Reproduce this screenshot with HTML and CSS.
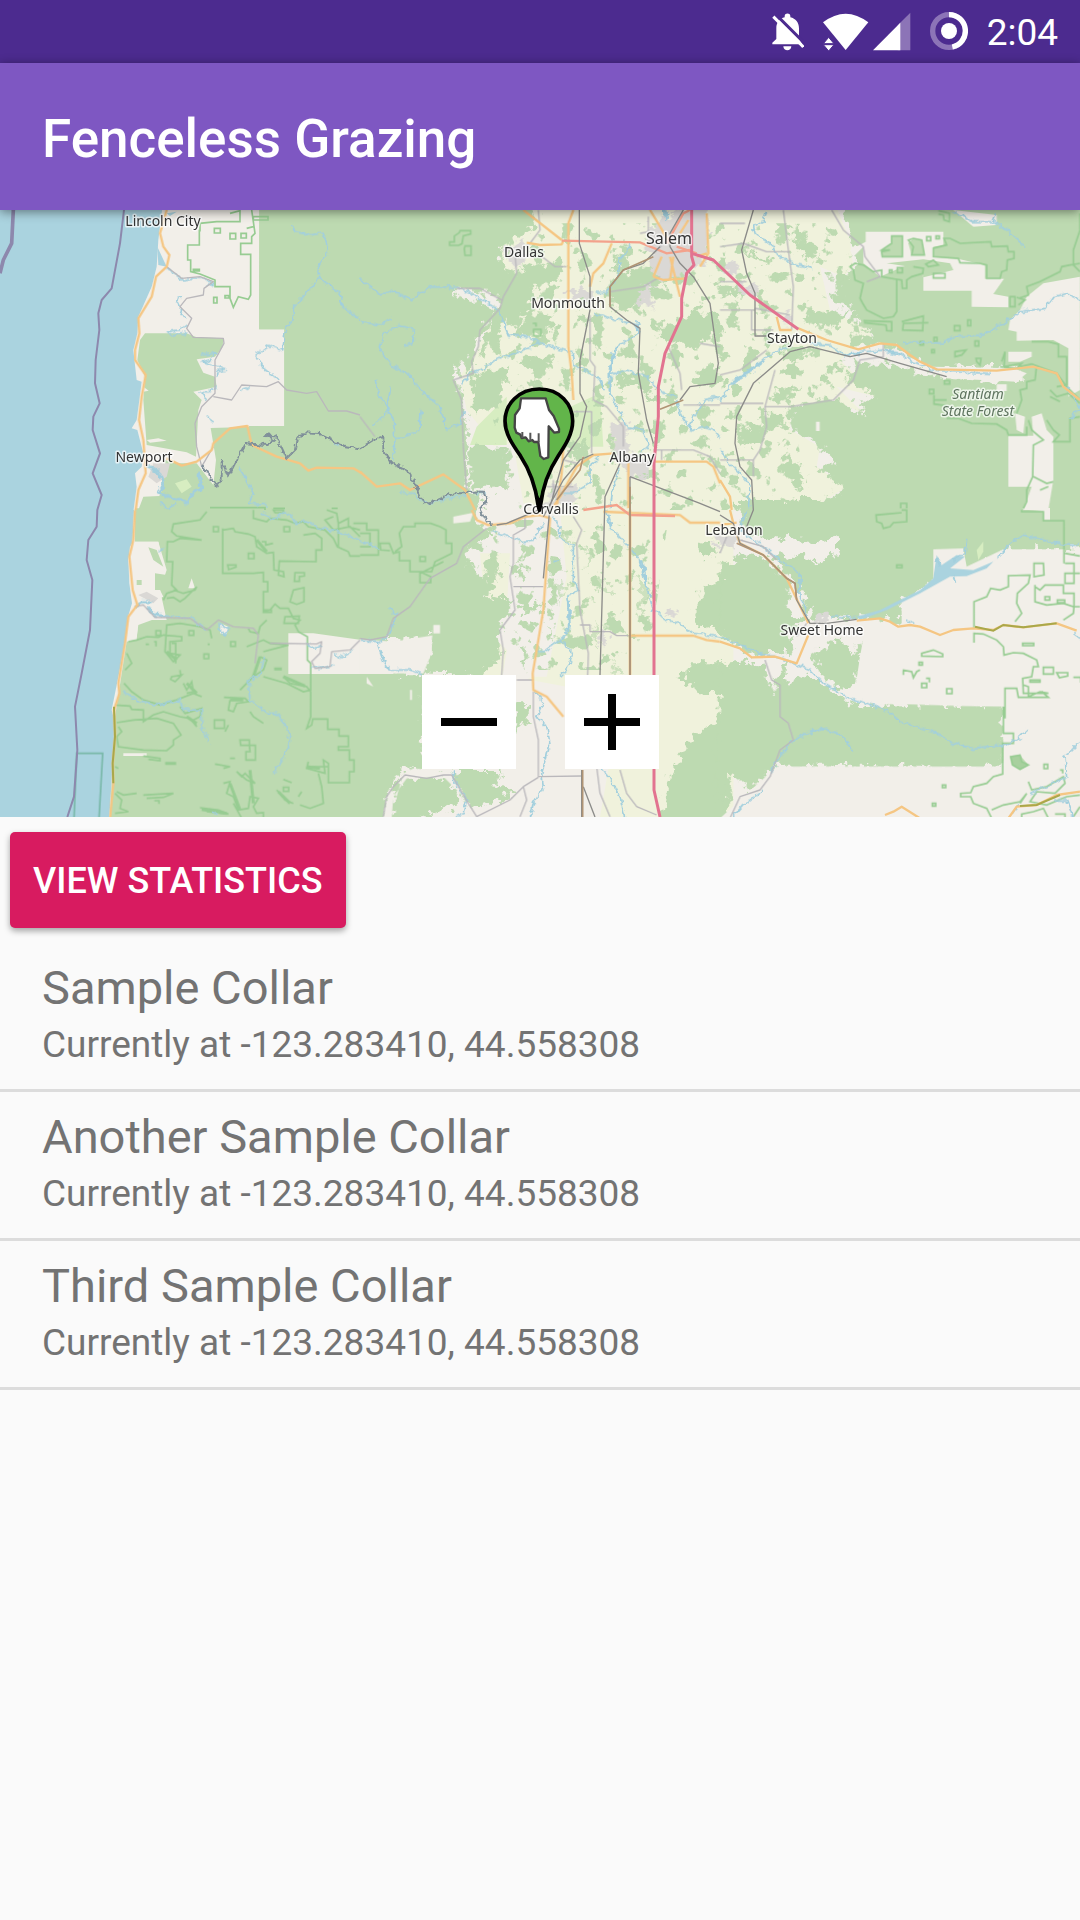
FILE: index.html
```html
<!DOCTYPE html>
<html lang="en">
<head>
<meta charset="utf-8">
<meta name="viewport" content="width=device-width, initial-scale=1">
<title>Fenceless Grazing</title>
<link rel="stylesheet" href="styles.css">
</head>
<body>
<div class="status-bar">
  <svg class="icon-bell" viewBox="90 36 96 117" aria-hidden="true">
    <path fill="#fff" d="M103 133H91v-5l12-11V85c0-18 10-29 25-33v-4c0-10 17-10 17 0v4c16 4 26 15 26 33v32l10 16zM124 139h24c0 16-24 16-24 0z"/>
    <path stroke="#4c2b8f" stroke-width="9" d="M104 46l88 88"/>
    <path stroke="#fff" stroke-width="9" d="M94 50l90 91"/>
  </svg>
  <div class="signals">
    <svg class="icon-wifi" viewBox="246 36 138 117" aria-hidden="true">
      <path fill="#fff" d="M246 67q68-52 136 0L314 150z"/>
      <path fill="#fff" stroke="#4c2b8f" stroke-width="3" d="M247 131l16-19 16 19zM247 134h32l-16 19z"/>
    </svg>
    <svg class="icon-signal" viewBox="396 36 114 117" aria-hidden="true">
      <path fill="#8c74b7" d="M508 38v113H470V76z"/>
      <path fill="#fff" d="M396 151l82-83v83z"/>
    </svg>
  </div>
  <svg class="icon-ring" viewBox="573 36 114 117" aria-hidden="true">
    <circle cx="630" cy="93" r="49" fill="none" stroke="#8c74b7" stroke-width="16"/>
    <path fill="none" stroke="#fff" stroke-width="16" d="M630 44a49 49 0 0 1 10 97"/>
    <circle cx="630" cy="93" r="24" fill="#fff"/>
  </svg>
  <time class="clock">2:04</time>
</div>

<header class="app-bar"><h1>Fenceless Grazing</h1></header>

<main>
<section class="map" aria-label="Collar map">
<svg class="map-canvas" viewBox="0 0 1080 607" preserveAspectRatio="xMidYMid slice">
<defs>
  <filter id="ragged" x="-5%" y="-5%" width="110%" height="110%" color-interpolation-filters="sRGB">
    <feTurbulence type="fractalNoise" baseFrequency="0.04" numOctaves="4" seed="4"/>
    <feDisplacementMap in="SourceGraphic" scale="60" xChannelSelector="R" yChannelSelector="G"/>
  </filter>
  <filter id="wavy" x="-5%" y="-5%" width="110%" height="110%" color-interpolation-filters="sRGB">
    <feTurbulence type="fractalNoise" baseFrequency="0.06" numOctaves="2" seed="9"/>
    <feDisplacementMap in="SourceGraphic" scale="20" xChannelSelector="R" yChannelSelector="G"/>
  </filter>
  <filter id="speckle" x="0" y="0" width="100%" height="100%" color-interpolation-filters="sRGB">
    <feTurbulence type="fractalNoise" baseFrequency="0.022" numOctaves="4" seed="12"/>
    <feColorMatrix values="0 0 0 0 .741  0 0 0 0 .855  0 0 0 0 .694  18 0 0 0 -10.8"/>
    <feComposite in2="SourceGraphic" operator="in"/>
  </filter>
</defs>
<rect class="land" width="1080" height="607"/>
<svg width="1080" height="607" viewBox="0 0 3240 1821">

<!-- farmland and ragged valley woods -->
<path class="farm" d="M1500 0H2200V1821H1790L1700 1750 1560 1600 1560 1500 1480 1460 1380 1300 1400 1200 1500 1080 1500 930 1480 700 1400 600 1380 500 1500 300z"/>
<g transform="translate(2160 -30)"><path class="farm" d="M0 0H340L390 120 400 200 370 230 300 200 330 330 450 390 455 410 430 430 400 450 360 480 470 590 350 560 430 640 340 600 215 620 210 690 300 740 290 800 380 860 270 930H0z"/></g>
<path class="land" d="M1400 720L1540 700 1570 880 1680 900 1700 1100 1640 1400 1600 1400 1500 1300 1380 1400 1340 1300 1300 900zM1560 1100H1640L1600 1400 1500 1440zM1540 1400L1700 1430 1820 1500 1900 1821H1500z"/>
<path class="farm" d="M1440 1030L1530 1030 1520 1200 1460 1230zM1780 1400L2180 1300 2120 1600 2040 1680 2040 1821H1950zM1830 1650L2010 1640 2010 1821H1800z"/>
<path class="pale" d="M1690 600L1800 550 1810 710H1680zM1430 650L1520 560 1520 705H1410z"/>
<path filter="url(#speckle)" d="M1540 40H2500L2640 350 2560 580 2380 640 2440 900H2160L2060 900H1560L1500 720 1450 500zM1400 930H1720L2000 960 1960 1250 1850 1380H1380z"/>

<g filter="url(#ragged)">
  <g transform="translate(1080 -30)">
    <path class="wood" d="M-340-40H500L530 75 455 125 420 160 415 190 455 215 465 245 425 290 280 265 290 285 400 330 405 350 360 400 335 480 335 520 290 490 290 540 300 570 310 620 320 700 320 870 370 890 350 970H-340z"/>
    <path class="wood" d="M440 240L510 200 520 290 460 390 500 350 575 340 570 400 470 400 430 350 415 430 360 470 380 400zM480 200L600 190 595 250 500 260zM340 520L450 500 430 570 390 620 340 640zM330 740L440 740 445 860 330 870zM830 210L900 170 950 200 990 230 940 250 860 260 850 310 780 340 750 290 760 240zM890 380L950 370 1000 330 1080 350V400L1000 440 960 420 910 430zM770 170L810 160 790 230 760 210zM480 460L580 480 560 520 480 490zM1000 540L1080 500V550L1010 560zM620 760L680 720 690 750 640 780zM760 520L880 530 860 560 770 560zM650 340L720 360 660 370zM700 420L740 440 700 445zM850 580L950 590 940 610 850 600z"/>
  </g>
  <g transform="translate(2160 -30)">
    <path class="wood" d="M350-40H1140V970H260L270 915 380 865 290 800 350 790 300 740 215 690 210 620 340 600 430 640 420 610 470 590 380 550 400 490 500 490 640 530 800 540 900 540V500H640L580 480 530 440 440 430 455 400 430 380 380 310 330 300 400 210 400 130zM190 60L240 90 290 150 280 190 230 130zM250 350L390 330 360 380 260 370zM190 440L260 440 240 480 190 490zM160 570L240 560 210 590zM130 640L200 640 190 690 140 690zM50 680L130 675 120 730 60 740zM60 140L150 180 150 195 80 160zM0 260L80 270 70 290 0 285zM200 760L260 830 240 870 180 810z"/>
  </g>
  <g transform="translate(1080 900)">
    <path class="wood" d="M-20-30H340L330 0 370 50 410 70 330 110 320 170 370 200 400 140 420 200 380 260 450 270 450 310 410 350 420 440 370 480 350 495 180 490 210 440 215 380 110 390 60 390-20 386zM-100 490H190V780L130 770 80 860 60 960H-100zM460 580L500 580 500 640 470 670zM280 780H430L400 830 470 850 400 880 330 890 300 850zM100 840L130 800 270 800 300 880 220 910 80 960zM1010 100L1060 90 1070 140 1010 130zM1110 190V370L1010 350 1000 300 1030 230zM950 510L1000 460 1080 460V550L1020 560 990 520zM1110 600L1000 680 930 790 920 860 900 960H1110zM480 290L550 280 540 300 500 310zM480 150L500 200 470 200zM560 350L590 380 570 390zM480 400L510 430 490 480z"/>
    <path class="wood" fill-opacity=".7" d="M590 60L640 80 650 110 610 90zM680 110L700 130 670 190zM700 200L740 220 770 260 720 240zM590 210L620 230 600 280zM830 200L860 230 850 350 840 300zM760 460L790 500 760 500zM700 340L720 410 690 380z"/>
  </g>
  <g transform="translate(2160 900)">
    <path class="wood" d="M40-30H1140V118H850L770 190 640 200V118H720L640 118V210L545 275V335L430 325 400 325 320 320 270 330 240 230 150 140 180 130 300 155 350 130 345 80 280 100 220 90 90 75zM0 170L60 140 120 130 210 220 200 300 260 340 210 360 220 430 150 430 90 440 0 370zM0 460L80 450 130 470 160 550 180 460 200 460 200 520 260 490 310 530 390 580 440 585 570 583 850 590V770H170L90 840 50 800 20 790 0 960H-20zM280 440L340 390 370 395 400 440 430 390 455 400 420 440 420 500 390 540 330 520 290 480z"/>
  </g>
</g>

<!-- west forests, straight survey edges -->
<g transform="translate(0 -30)">
  <path class="land" d="M400 0H778V388H853V678H632V860H405z"/>
  <path class="wood" d="M778 0H1200V930H415L430 890 478 888 490 860 495 780 530 790 590 790 640 855 648 780 632 684 853 678V388H777zM435 400H560L590 412 670 415 668 440 645 470 590 478 610 518 645 530 650 560 580 575 605 600 595 630 588 770 560 757 440 735 430 600 435 530 412 480 420 420z"/>
  <path class="sea" d="M0 0H490L475 120 470 200 455 260 415 350 412 400 400 450 410 540 425 545 418 600 410 660 395 685 412 690 430 760 425 800 405 820 410 860 400 935H0z"/>
  <path class="sea" d="M472 140L500 200 475 195zM500 40L530 35 510 48z"/>
  <path class="town" d="M460 790L510 790 500 830 470 850 445 830z"/>
  <path class="pale" d="M525 850L560 838 575 860 545 880z"/>
  <path class="land" d="M440 720L475 715 500 722 450 728zM430 560L446 572 430 575z"/>
</g>
<g transform="translate(0 900)">
  <path class="wood" d="M405-5H1150V925H330L345 620 380 395 410 390 415 330 500 330 480 240 490 180 475 95 405 95z"/>
  <path class="land" d="M865 370H940L1085 390 1180 397V492H865z"/>
  <path class="sea" d="M0 0H402L398 90 385 150 388 220 396 280 384 320 375 400 355 500 335 600 345 640 338 760 328 925H0z"/>
  <path class="land" d="M390 110L400 95 475 95 500 180 480 240 490 260 420 290 470 325 415 345 410 380 380 392 388 310 400 290 385 150z"/>
  <path class="wood" d="M445 112L470 120 490 170 460 150zM410 210h15v15h-15zM465 190L500 195 500 240 465 240z"/>
  <path class="town" d="M415 255L440 245 475 265 460 280z"/>
  <path class="land" d="M565 235L575 205 585 235zM660 340L685 350 680 375 660 370zM370 730h70v8h-70z"/>
</g>

<!-- clear land inside the forests -->
<g transform="translate(2160 -30)">
  <path class="land" d="M437 95H670V135L640 140V170L720 178 795 195V236H852L820 282 865 290V322L755 320V272H610V232L600 200 560 195 480 230 430 190 430 140 400 170 390 150 437 125zM1080 230V570L1045 590 1045 445 1000 420 890 422 890 395 865 390 870 360 900 330 920 290 970 250zM500 445L640 500 880 505 920 520 890 545 680 535 640 510 500 465zM865 455H935V470L900 485H865zM830 553h30v20h-30zM885 640L915 650 910 700 890 690zM865 707H940L935 650 965 640 980 690 1000 710V840L985 930H910L935 860H865zM700 30L830 45V75L760 80zM288 665h11v28h-11z"/>
  <path class="wood" d="M485 150L515 130 515 108 547 108 547 170 487 170 485 155 510 150zM565 130L580 115 605 120 613 165 575 165zM500 190L610 178 690 190 700 210 610 232 600 205z"/>
  <path class="farm" d="M205 60L230 75 225 92z"/>
</g>
<g transform="translate(2160 900)">
  <path class="land" d="M545 275L640 215V118L730 115 740 170 850 118H1035V160H1090V925H0L60 870 170 770H850V590L735 588 570 583 480 582 400 575 420 440 440 330 545 345zM905-5H990V30H970V5z"/>
  <path class="wood" d="M870 740L900 735 925 765 900 780 875 765z"/>
  <path class="sea" d="M410 320L480 300 530 275 600 240 640 205 650 135 665 165 710 135 735 140 690 175 760 180 820 155 850 125 800 175 740 198 690 200 600 250 500 300 420 330z"/>
  <path class="pale" d="M770 120L790 95 790 125 775 150z"/>
</g>
<g transform="translate(1080 900)">
  <path class="land" d="M0 388L100 395 217 376 210 440 190 490H0zM220 345h20v25h-20zM280 20L340 8 330 35 280 40zM20 500L40 530 20 520zM150 540h6v30h-6zM70 925L90 840 110 860 130 790 160 775 250 785 270 790 310 850 330 925 310 860 250 800 140 805 100 860 95 925z"/>
</g>

<!-- built-up areas -->
<g filter="url(#ragged)">
  <path class="town" d="M1940 60L2030 0 2120 0 2130 130 2080 180 1990 220 1950 160zM1520 110L1570 100 1580 160 1530 170zM1700 240L1780 240 1780 275 1710 270zM1830 630L1880 640 1890 720 1940 740 1940 810 1890 800 1840 720zM1650 830L1730 820 1720 880 1650 890zM2170 160L2200 150 2210 190 2180 190zM2220 220L2280 230 2270 260 2210 250zM2140 970L2210 990 2210 1010 2150 1000zM2350 310h30v30h-30zM2445 1215L2480 1210 2480 1235 2450 1240zM1800 1270h20v30h-20zM2000 1200h20v20h-20zM1920 230L1960 220 1950 290 1920 280z"/>
</g>

<!-- protected-area outlines -->
<g class="reserve">
  <g transform="translate(0 -30)">
    <path d="M690 40L720 32V65H650L600 70V92H598V135H563V180H572V215L600 222 645 240V260H690V295L700 322 715 290 745 298 752 285V163H722V130H755V110L765 100 755 30M643 85h18v14h-18zM690 100h17v17h-17zM723 100h16v14h-16zM641 292h10v17h-10zM675 287h12v7h-12zM740 85L760 80M760 50h44v10h-44zM580 208h18v5h-18zM630 923H795V930M820 925H855M995 925h18"/>
  </g>
  <g transform="translate(0 900)">
    <path d="M620 5L600 30 520 42 515 65 530 78 605 90 540 85 520 95 502 95 500 155 518 155 515 225 530 240 500 250 490 270M520 240L550 250 585 240 590 230 555 265 540 275 520 262 500 265M640 50h15v15h-15zM668 55V190H760L790 187V215H803V245H790V305L810 300 825 282 840 295 865 295 880 325 900 330 885 345 895 365 922 380V450L932 460V540L910 545 860 520 790 500M760 0V25L800 35 810 25 860 30 885 40 910 35 925 50 975 60 1000 85 1012 110 1045 125 1050 138H1080M820 0H850V8H825zM668 60L700 55 705 65 745 72 765 80 770 110 800 130 820 127 822 180 850 185 852 200 835 195 838 153 948 155V120H965V85L945 70 910 75M745 130h17v16h-17zM683 165h25v6l-22 8zM785 95h12v10l22-5M852 50h17v15h-17zM980 0L1010 10 1015 40 1045 25 1045 50 1080 60M1000 20L975 30 1000 60 1050 50 1080 80M1015 40V110M885 188h28v10l-15 2v14h-15zM880 240L912 233V275L890 283 870 275zM855 320L898 318 895 340 852 340zM790 300h24v7h-24zM800 330L780 350 775 370 750 365 745 355"/>
    <path d="M385 395L410 390 440 380 475 382 490 375 545 380V392L510 395V430L540 435 520 455 495 425 500 345 540 340 600 350 630 360 635 385M468 362h14v14h-14zM567 362h14v14h-14zM692 395h14v14h-14zM612 432h14v14h-14zM437 403h10M462 395h6v14M623 403h6M515 400h12v60M515 500L545 495 525 515 512 508zM540 480L542 500M380 430L395 460 375 480M372 520L395 545 430 570 480 585 530 570 580 550 605 560M550 520L560 540 575 515 580 545 560 550M540 590L555 610 605 595 600 620 580 630 590 650 570 625 540 620 490 605 460 615 430 635 430 600 395 598 390 588 345 585M350 638L400 630 470 625 520 640 543 675 520 690 520 705 500 722 430 720 355 710 350 680 365 665 355 650M643 630h30v25h-30zM675 665L685 645M672 562L735 565 745 575 710 580 700 605 685 600 690 570M750 605L760 620 790 640M720 690h28v16h-26zM748 706h18V750h-28v-25h12zM720 540L760 500 790 480 800 450 780 440M740 410L790 390 810 400 865 405 790 425M825 475h18v4h-18zM850 500L870 520 920 530 932 545V620L920 655 935 645 938 627H983V658H1017V678H1045V710H1015V720H1048V750H1062V785H1048V818H985V760L970 750 975 790 920 775 925 755M935 770H985M430 738L480 745 480 752 445 748M498 758h28v4h-28zM645 762L690 770 670 775M690 745h15M710 785L725 800 735 790 765 820 740 810zM345 770L355 775M350 845L370 855 410 850M430 855L520 850 490 862 440 865M463 872h14v10M345 850L365 870 360 895 385 905 345 910M600 893L655 900 685 912 620 905M670 820L690 815 680 850 700 860 715 900 745 895 750 860 775 865 760 890 770 910 790 908V925M700 880L725 925M830 840L855 870 880 880M850 832h16v12h-16zM850 808L875 818M895 860L905 845M900 885L930 895 970 880 965 830 955 790"/>
    <path stroke-width="9" d="M770 90L800 125M560 520L590 550M690 820L705 860 720 900M750 780L760 880M850 500L915 528M920 770L960 775M780 440L760 500M500 425L530 450M690 570L730 570M560 620L590 640M605 898L680 910M835 845L870 880"/>
    <path stroke="#78b8a8" d="M222 925L230 730H308L297 925"/>
  </g>
  <g transform="translate(1080 -30)"><path d="M300 92h32v10l-22 5-4 24-10 5h-27v-10h14v-18l15-10zM315 138h18v28h-18l-2-20zM521 388h22v20h-22zM518 370h10v10"/></g>
  <g transform="translate(1080 900)"><path d="M-20 40H20V60H55V100H88L100 130 118 125V152H150V185H180V218H212V200L180 185 215 185 225 155 275 130V100H258V60L240 50 212 40H165V50H130L118 70 125 110 105 125M180 140h16v14h-16zM180 190L250 155M60 100L62 120 90 122M0 70H30V110H0M0 135H55V60"/></g>
  <g transform="translate(2160 -30)">
    <path d="M485 150L515 130 515 108 547 108 547 170 487 170 485 155 510 150zM565 120L580 115 605 120 613 165 575 165 580 140zM532 203h15v15h-15zM508 210h8v8h-8zM580 200L610 205 608 220 575 230 560 240 560 265 547 265 545 240 530 238V335L520 350 490 355 440 330 428 310 420 295 430 250 405 240 400 210 390 200 405 190 430 195 460 215 485 210 485 230 530 238M640 220h35v14h-35zM617 192L640 180 655 195 625 200zM620 110h12v12h-12zM648 108h10v8h-10zM655 32L688 40V65L672 60 670 45 655 42M640 170L640 145 680 135 672 115 690 115 720 130 812 125 815 140 862 138 865 155 882 155V175L862 180 860 210 845 215 840 235H800V195L780 190 720 188 715 175zM870 290h15v30h-15zM890 292L915 300 895 315M430 362L515 365V393L500 392 498 375 432 368M545 365L610 348 608 392 548 390 550 370 625 368M703 377h17v15h-17zM743 360h9v17h-9zM765 423h11v15h-11zM600 425h10v10h-10zM635 449h8v9h-8zM705 470V455L738 450 725 465zM768 475h15l-3 20-10-10zM642 412h9v12h-9zM673 542h16v10h-16zM628 568h13v13h-13zM642 585L642 612 680 617M680 655L715 655 755 670 830 672 860 690 865 705H920V680M640 600h40M845 485L855 455 852 500 905 490 890 505 840 500M900 500L935 492 970 505 1010 520 1040 560 1080 600M935 425H985L1015 433V470H1040V555L1010 560M890 640L905 600 900 570 920 565V545L945 540 950 495M990 570L1010 590 1045 580 1080 610M990 590L1020 605M925 660L935 690 970 720 940 735 938 830 920 870 920 905 910 925M980 660L1000 690 1018 705 1000 725H1050V655L1080 650M1080 40V90L1060 150 1060 195 1080 215M1080 190L1050 195 1025 200 1020 215 960 245 920 260 925 285 895 295M940 830L980 850 1000 845M960 870L985 860M542 925V910h18v15"/>
  </g>
  <g transform="translate(2160 900)">
    <path d="M545 0H560V35L520 38 510 50 490 55 485 40 470 35 468 15 500 12 545 8M905 0V5H970V32H1032V160M1035 130L1080 138M1035 160H1062V190H1080M1035 190h27v30h-27zM942 160h28l2 35-30 5zM530 165h16v8h-16zM762 355V275L800 260 812 235 840 240 865 230V197L930 195 925 220 892 250 890 280 905 310 885 335M945 230L960 240 975 225 1030 225V250H1062V290H1080M945 225V275L980 285 1030 280 1060 290M975 260h14v10h-14zM1012 270h22v8h-22zM1062 290L1060 310 1030 330M762 398V370L790 372 830 390 850 410 852 435 880 428 910 430 950 450 955 470H940L935 500 908 505 910 550H985L960 545 925 560 925 530 910 525M970 472h30v20h-30zM1010 488h33v10l-25 5zM1060 502h22v16M908 400h33v7h-33zM930 510h30v6h-30zM605 438V430L640 420 668 432 668 440zM548 480L575 485 580 503 590 485 600 480M550 495V482M605 520h15v13h-15zM618 505h10v12M597 457h10v8h-10zM680 536h16v15h-16zM855 625V535H890L895 562H985L965 545M850 590V670H880V700H848V792L820 800 800 820 760 830 752 848 722 850V860H752L760 880 800 895 815 925M848 700V770M815 900L850 885 900 875 920 850 900 880M667 825h10v8h-10zM637 880h10v8h-10zM972 763h11v13h-11zM1020 780h8v10M925 815L935 840 980 830 1030 800 1035 820 1005 850 950 845 930 875 980 885 1040 860 1080 855M905 925V912L940 905 970 895 985 925M1005 912h30v13M1060 920L1080 890"/>
    <path fill="#a8d09e" d="M872 740L900 735 905 755 925 765 900 778 878 765z"/>
  </g>
</g>

<!-- waterways -->
<g class="river" filter="url(#wavy)">
  <g transform="translate(0 -30)">
    <path d="M875 70L885 95 930 105 970 100 985 150 955 200 955 235 910 290 880 320 880 355 857 385 848 450 810 437 768 465 790 505 835 540M955 230L1020 280 1030 320 1080 360M500 205L550 240 580 235 605 235 640 250 615 260M545 290L530 300 545 330 540 345 560 350M560 375L540 390 500 395 510 405 560 400M605 465L650 460 630 480 610 485 680 510 650 515 650 530M650 560L630 575 600 575 620 600M720 570L750 560M620 650L640 665M1000 725L1020 740M715 800L740 840 760 880 745 910 800 915"/>
    <path class="wide" d="M440 795L480 820 492 850 478 880 520 895 565 908 575 880 607 865 595 815"/>
    <path d="M480 905L500 925 530 910"/>
  </g>
  <g transform="translate(0 900)"><path class="wide" d="M405 290L430 275 455 275M440 290L465 315 500 320"/>
    <path d="M500 318L580 328 620 360M780 10L820 25 860 5 890 40 920 35 960 55 1000 60 1040 75 1080 95M660 340L685 355 675 375 662 365zM920 400L945 415 965 405M935 475L965 475 1000 465M1000 425L1020 445 1060 420M370 545L410 570 470 585 540 570 550 600 605 600 605 650 627 700M795 440L780 490 745 515 750 570 800 610 830 610 870 670 865 715 840 760 820 790M480 125L490 110M640 905L655 915"/></g>
  <g transform="translate(1080 -30)">
    <path d="M0 235L60 285 100 270 150 300 210 260 290 262 360 295 415 330 445 405 500 410 560 435 640 460 645 500 700 520 720 540 730 570M0 365L60 375 95 355M135 435L160 430 160 385 120 378 70 400 60 450 100 500 150 525 180 570 240 620 260 690 300 670 310 630M45 540L55 580 80 620 75 650 40 675M93 560L80 620 100 660 105 720 180 690 183 630M105 720L98 780M540 430L480 455 415 475 370 505 330 520 305 555M700 340L740 350 830 375 835 400 770 440 750 520 750 580 780 640 800 680 850 690 865 740 840 755M750 525L800 510 860 530 910 580 950 590M810 135L780 180 775 230 740 280 710 280M830 360L840 400M950 600L960 640 990 690 1030 680 1060 690 1080 715M1080 590L1030 600 1000 650 985 690M720 770L690 800 690 850 640 880 600 880 590 900M780 800L760 860 750 925M380 880L360 875 350 880M120 880L160 880 180 900 210 910 280 890 310 890 330 870"/>
    <path class="wide" d="M750 510L750 570M760 460L750 510M915 30L920 60"/>
  </g>
  <g transform="translate(1080 900)">
    <path d="M0 95L30 100 60 120M395 60L430 75 490 95 520 90 550 40M580 20L600 50 595 80 640 110 640 210 655 240 620 260 630 300 625 360 600 390 550 425 535 425M600 390L640 430 620 480 600 500M740 0L750 50 800 105 850 160 860 230 880 300 920 330 960 340 1000 370 1080 380M50 395L70 450 90 480 150 480 190 492M88 295L110 315 90 370 60 395 0 390M525 545L550 580 530 620 560 650 570 700 545 790 550 830 520 880 510 925M720 770L760 820 780 860 795 925M280 780L285 820 320 870 310 910 290 920M580 155L600 152"/>
    <path class="wide" d="M625 270L628 350M745 15L750 50M840 150L860 220"/>
  </g>
  <g transform="translate(2160 -30)">
    <path d="M140 35L130 65 100 75 105 100 160 140 165 160 220 190 275 205M0 600L40 550 100 510 140 470 200 440M270 430L330 435 370 465 430 455 490 450 530 455 580 485 640 510 700 515 810 520M545 430L580 425 670 430 700 410 790 405 850 370 900 335 975 325 1000 290 1040 280 1080 300M700 35L760 65 820 65 860 90 915 140M820 65L830 40M1040 560L1060 590 1080 630 1050 655M0 750L30 790 60 820 90 860 85 925"/>
    <path class="wide" d="M40 545L130 485M370 465L420 460M500 455L540 465"/>
  </g>
  <g transform="translate(2160 900)">
    <path d="M80 0L70 30 60 60 130 110 180 150 240 190 240 260 265 320M330 320L410 320M830 145L870 100 910 75 970 90 1030 105 1080 105M740 90L735 130 700 150M0 380L60 405 130 435 180 440 220 460 270 480 310 520 380 560 440 580 500 600 540 635 640 665 700 700 750 715 860 705 890 690 925 658M400 725L370 680 310 655 260 670 215 695 180 740 150 790M130 840L70 885 35 925M1080 695L1035 740 1040 800 980 830 930 850M1060 370L1080 385M1000 870L1040 870 1060 925M880 910L900 880M120 435L150 435M560 330L580 340M700 200L710 220M650 140L660 170"/>
  </g>
</g>

<!-- minor roads -->
<g class="minor">
  <g transform="translate(0 -30)"><path d="M500 200L545 235 600 230 640 245 612 265 610 285 560 295 540 320 575 355 560 385 580 412 670 415 672 430 645 480 645 580 605 620 585 670 590 740 605 800M640 590L695 600 725 555 800 560 835 545 860 570 920 580 950 575 985 633 1040 633 1080 645M640 740L605 800"/></g>
  <g transform="translate(0 900)"><path d="M405 290L430 285 465 322 570 325 620 360 655 330 700 350 760 355 775 375 765 460M810 400L950 402 965 395 960 430 935 455 945 475 990 470 995 425 1050 420 1080 390"/></g>
  <g transform="translate(1080 -30)"><path d="M535 30L540 90 510 130 465 160 470 220 430 290 420 325 360 390 355 440 335 485 340 520 280 540 305 600 310 740 320 870M290 265L360 265 425 300M540 165L585 200H620M0 650L45 710M690 345L690 480 705 500 700 600 740 620 790 680 790 740M640 635H695V760M610 780L650 790M925 440L960 520 965 570M865 50V95L840 100M750 275L850 260 900 230M920 120L880 160M905 750V780M880 750L1000 750 1050 770 1080 820M560 860H640M580 840V890M1020 430L1080 440M970 615H1080"/></g>
  <g transform="translate(1080 900)"><path d="M380 55L310 110 290 160 210 205 150 290 100 325 80 380 30 390 0 385M495 20V55L460 75V160L450 200 465 300 420 360 430 420 425 495M460 230H550M640 20L665 60 650 100 660 300 685 430 683 495M660 345H690V365H750L770 377H810M520 545V620L535 690V800L665 798M470 510H520M535 802L490 830 450 870 350 920 325 880 275 795 250 795 200 805 135 795 100 830 80 860 70 920M490 830L500 870 480 920M710 770L720 850 750 920M780 780L800 850 830 890 890 915"/></g>
  <g transform="translate(2160 -30)"><path d="M335 30L370 90 430 140 435 170 480 230 440 245M0 70H75M0 140L70 130 140 155H210M190 30L205 150 220 260 215 390M0 245H80M105 330H0M95 330V390H160M105 325L210 345M0 525L60 510 140 450M165 510L135 620 140 680 120 750 100 780H0M100 780V830M0 610H130M135 620L210 620 340 600 400 540 420 480 490 470V430"/></g>
  <g transform="translate(2160 900)"><path d="M60 90L130 110 170 150M135 450L155 510 180 525V620L205 640 220 690 180 720 150 800 120 840 60 860 30 925M0 130L20 80M230 380L260 340"/></g>
</g>

<!-- main roads -->
<g class="road">
  <g transform="translate(0 -30)"><path d="M500 30L480 100 490 140 508 165 500 200 468 230 455 290 415 355 418 400 405 450 405 480 437 525 425 590 417 660 430 720 435 790 437 820 415 870 407 930M500 775L545 797 590 785 635 750 640 730 690 685 742 678 755 735 830 770 900 790 925 812 950 803 1060 805 1085 820"/></g>
  <g transform="translate(0 900)"><path d="M405 0L400 90 388 140 398 240 412 285 385 320 375 400 355 520 358 550 342 600 345 680 338 760 340 820 330 925"/></g>
  <g transform="translate(1080 -30)"><path d="M0 815L50 860 120 850 150 870 250 823 315 870 345 930M490 30L605 120M500 128L540 135 605 133 610 122M640 30L625 70V440L635 520 640 600M610 740L605 820 590 920M755 130L730 190 700 220 690 260M870 30L900 80 930 130M880 230L910 240 980 235M930 170L960 290M905 170L880 230M1040 40L1045 160 1020 200M985 60L960 100M1040 160L1010 170M940 170L930 240M885 785H1040L1060 800 1080 850M805 790V925M580 920L600 890 650 800 700 765 760 760"/></g>
  <g transform="translate(1080 900)"><path d="M335 0L350 30 385 45 450 40 495 20 540 15 570 25 550 300 530 420 518 490 520 540 560 560 610 620M810 0V495M810 377H1000L1040 390 1080 395M730 5L960 15 990 38H1080"/></g>
  <g transform="translate(2160 -30)"><path d="M235 385L320 420 415 448 480 430 530 435 570 465 600 485 650 508 830 512 940 500 1010 520 1030 560 1080 600M170 350L180 390H215M0 840L30 890 35 930"/></g>
  <g transform="translate(2160 900)"><path d="M0 45L50 38M30 0L45 60 60 100 130 135 200 205 265 340M410 332L480 325 510 335 535 350 570 345 600 350 660 375 700 360 760 355 820 360 850 345 910 352 1010 340 1070 362M0 395L60 415 95 442 165 440 230 460 265 375M495 915L520 905 545 890 600 925M865 925L890 890 950 885 1010 855 1080 845"/></g>
</g>
<path class="trunk" d="M1685 92L1920 97 2000 130 2070 120M1750 900L1850 885 1890 915 2025 918M2000 100L2050 10 2070 0M2030 110L2090 130"/>
<path class="mixed" d="M2925 1250L2980 1262 3010 1245 3070 1252 3170 1240M3060 1788L3110 1785 3180 1755M342 1490L345 1580 338 1660 340 1720"/>

<!-- railways -->
<g class="rail" filter="url(#wavy)">
  <path class="coastal" d="M605 765L650 830 665 810 665 750 685 800 705 760 740 700 800 705 820 690 795 675 830 680 860 745 885 720 890 690 905 670 960 672 1030 708 1080 715 1120 690 1150 680 1150 720 1170 755 1220 780 1250 830 1270 880 1300 875 1360 850 1390 850 1400 845 1450 845 1460 870 1440 900 1455 930 1480 945"/>
</g>
<g class="rail">
  <path d="M1738 0V100L1770 200 1770 300 1740 450 1740 550 1760 590 1740 680 1690 750 1650 890 1630 1105M2050 0L2010 70 2010 110 2040 160 2080 200 2130 280 2155 460 2145 520 2070 530 2040 570M1980 110L1930 160 1870 180 1830 230 1830 290 1880 330 1920 355 1915 490 1940 630 1960 700M1890 800V1395M1890 800L2100 880 2160 905M1860 760L1815 860 1800 1395M1780 732L1740 750 1690 810 1630 920M1490 945L1520 940 1640 890M1745 1680V1821M1750 1730L1785 1821M2260 0L2225 120 2240 190 2265 250V378H2300M2840 500L2700 460 2600 430 2550 440 2490 425 2430 410 2370 425 2260 520 2210 620 2205 700 2220 770 2255 810 2260 900 2240 950M2160 915L2200 940 2220 1000 2290 1035 2360 1105 2385 1120 2390 1170 2430 1240H2480L2570 1228"/>
</g>
<path class="brown" d="M1750 740L1740 780 1670 870M1830 290L1830 230 1870 180 1960 140M2050 570L1980 598M1748 1680V1821M1890 830V1395M2210 1000L2290 1035 2360 1105 2385 1120 2390 1170"/>

<path class="motorway" d="M2075 0V140L2082 165 2060 190 2045 265 2045 320 1995 430 1975 530 1975 620 1962 760V1740L1980 1821M2075 130L2140 150 2250 255 2395 358"/>
<g class="border">
  <path class="thick" d="M40 0L35 100 10 150 0 190"/>
  <path d="M372 0L360 100 335 235 305 270 295 310 298 360 287 450 285 520 299 580 280 620 278 660 300 730 278 790 305 855 292 900 290 950 265 990 260 1050 277 1110 270 1260 245 1390 225 1490 232 1620 222 1760 202 1821"/>
</g>
</svg>

<g class="places">
  <text x="163" y="16">Lincoln City</text>
  <text x="144" y="252">Newport</text>
  <text x="524" y="47">Dallas</text>
  <text x="568" y="98">Monmouth</text>
  <text x="669" y="34" class="city">Salem</text>
  <text x="632" y="252">Albany</text>
  <text x="792" y="133">Stayton</text>
  <text x="551" y="304">Corvallis</text>
  <text x="734" y="325">Lebanon</text>
  <text x="822" y="425">Sweet Home</text>
  <text x="978" y="189" class="park">Santiam</text>
  <text x="978" y="206" class="park">State Forest</text>
</g>

<!-- collar marker -->
<g transform="translate(479 160) scale(.33333)">
  <path fill="#62b54a" stroke="#000" stroke-width="11" stroke-linejoin="round" d="M181 57C119 57 78 103 78 153 78 191 101 224 124 257 151 298 169 342 177 404L181 421 185 404C192 342 211 298 238 257 260 224 281 191 281 153 281 103 243 57 181 57z"/>
  <path d="M163 340L181 424 199 340 190 365 181 385 173 365z"/>
  <path fill="#fff" stroke="#454545" stroke-width="7" stroke-linejoin="round" d="M126 85H200L210 120 224 138 240 176 240 186 226 188 209 169 208 262 194 267 184 258 178 216 165 216 160 210 149 214 140 202 128 204 124 194 112 188 107 173 108 135 122 115z"/>
  <path fill="none" stroke="#555" stroke-width="6" d="M130 186V204M154 188V212M179 190V216"/>
</g>
</svg>
<div class="zoom-controls">
  <button type="button" class="zoom-button" aria-label="Zoom out"><svg viewBox="0 0 56 56"><path d="M0 24H56V32H0z"/></svg></button>
  <button type="button" class="zoom-button" aria-label="Zoom in"><svg viewBox="0 0 56 56"><path d="M0 24H24V0H32V24H56V32H32V56H24V32H0z"/></svg></button>
</div>
</section>

<button type="button" class="stats-button">VIEW STATISTICS</button>

<ul class="collars">
  <li><h2>Sample Collar</h2><p>Currently at -123.283410, 44.558308</p></li>
  <li><h2>Another Sample Collar</h2><p>Currently at -123.283410, 44.558308</p></li>
  <li><h2>Third Sample Collar</h2><p>Currently at -123.283410, 44.558308</p></li>
</ul>
</main>
</body>
</html>
```
FILE: styles.css
```css
* { box-sizing: border-box; }

body {
  margin: 0;
  min-height: 100vh;
  background: #fafafa;
  color: #737373;
  font-family: Roboto, "Liberation Sans", sans-serif;
}

h1, h2, p, ul { margin: 0; padding: 0; }
button { border: 0; font: inherit; cursor: pointer; }

.status-bar {
  display: flex;
  align-items: center;
  justify-content: flex-end;
  gap: 19px;
  height: 63px;
  padding-right: 22px;
  background: #4c2b8f;
  color: #fff;
}
.status-bar svg { height: 39px; }
.signals { display: flex; gap: 4px; }
.icon-bell { width: 32px; }
.icon-wifi { width: 46px; }
.icon-signal, .icon-ring { width: 38px; }
.clock { padding-top: 2px; font-size: 37px; line-height: 43px; }

.app-bar {
  position: relative;
  z-index: 1;
  display: flex;
  align-items: center;
  height: 147px;
  padding: 4px 42px 0;
  background: #7e57c2;
  box-shadow: 0 2px 10px rgba(0, 0, 0, .45);
  color: #fff;
}
.app-bar h1 { font-size: 53px; line-height: 62px; font-weight: 500; }

.map {
  position: relative;
  aspect-ratio: 1080 / 607;
  overflow: hidden;
}
.map-canvas { display: block; width: 100%; height: 100%; }

.land { fill: #f2efe9; }
.sea { fill: #aad3df; }
.farm { fill: #f0f2dc; }
.wood { fill: #bddab1; }
.pale { fill: #d7edc1; }
.town { fill: #dad8d5; }
.reserve { fill: none; stroke: #97cc92; stroke-width: 5; }
.river { fill: none; stroke: #a2cfdd; stroke-width: 5; stroke-linejoin: round; }
.river .wide { stroke-width: 9; }
.minor { fill: none; stroke: #bab8bc; stroke-width: 4; stroke-linejoin: round; }
.road { fill: none; stroke: #f5c683; stroke-width: 7; stroke-linejoin: round; }
.trunk { fill: none; stroke: #f3a28c; stroke-width: 7; }
.motorway { fill: none; stroke: #e27390; stroke-width: 9; stroke-linejoin: round; }
.mixed { fill: none; stroke: #a9a84a; stroke-width: 6; }
.rail { fill: none; stroke: #8b8b89; stroke-width: 4; stroke-linejoin: round; }
.rail .coastal { stroke: #80909a; stroke-width: 6; }
.brown { fill: none; stroke: #b09475; stroke-width: 5; stroke-linejoin: round; }
.border { fill: none; stroke: #8d88ad; stroke-width: 6; stroke-linejoin: round; }
.border .thick { stroke-width: 11; }

.places {
  font: 14px "Noto Sans", sans-serif;
  text-anchor: middle;
  fill: #333;
  stroke: rgba(255, 255, 255, .7);
  stroke-width: 3px;
  stroke-linejoin: round;
  paint-order: stroke;
}
.places .city { font-size: 16px; }
.places .park { font-style: italic; fill: #5f7560; }

.zoom-controls {
  position: absolute;
  left: 0;
  right: 0;
  bottom: 48px;
  display: flex;
  justify-content: center;
  gap: 49px;
}
.zoom-button {
  display: grid;
  place-items: center;
  width: 94px;
  height: 94px;
  padding: 0;
  background: #fff;
}
.zoom-button svg { width: 56px; height: 56px; }

.stats-button {
  display: block;
  height: 96px;
  margin: 15px 10px;
  padding: 2px 23px 0;
  border-radius: 5px;
  background: #d81b60;
  box-shadow: 0 3px 6px rgba(0, 0, 0, .35);
  color: #fff;
  font-size: 36px;
  line-height: 43px;
  font-weight: 500;
}

.collars { list-style: none; }
.collars li {
  padding: 17px 42px 23px;
  border-bottom: 3px solid #dcdcdc;
}
.collars h2 { font-size: 47px; line-height: 55px; font-weight: 400; }
.collars p { margin-top: 8px; font-size: 37px; line-height: 43px; }
```
